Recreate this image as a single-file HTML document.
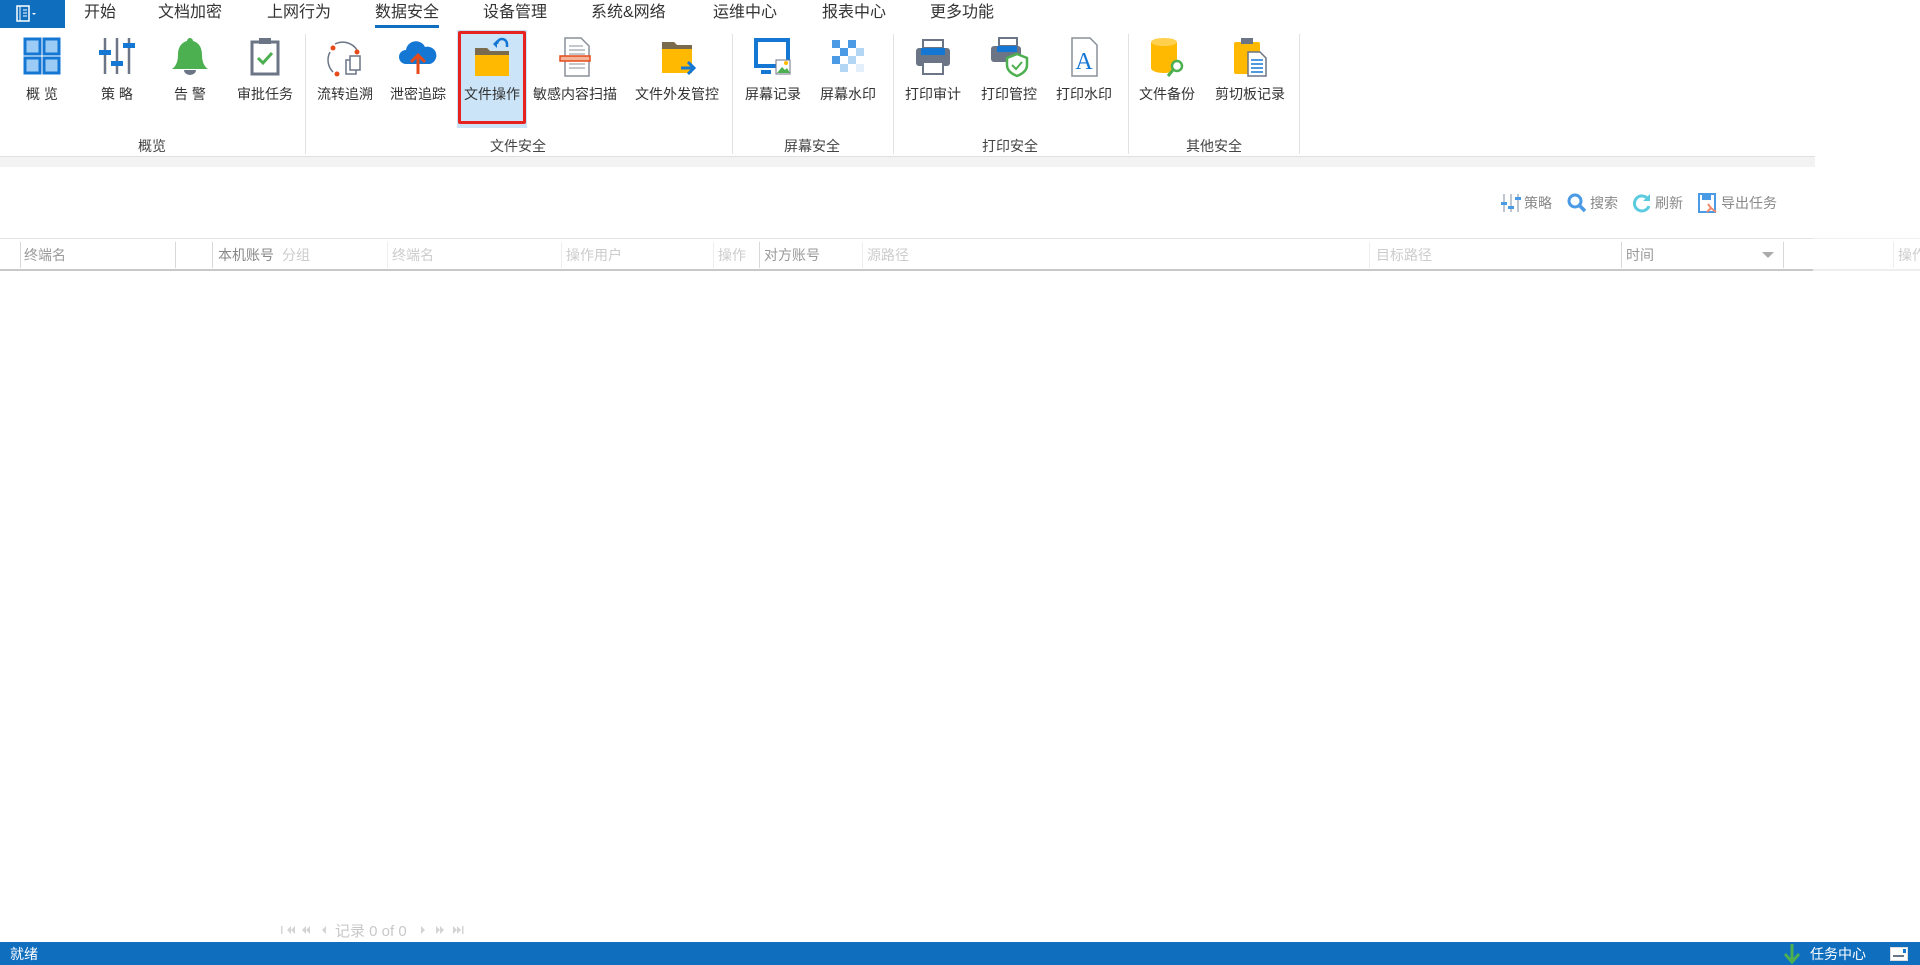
<!DOCTYPE html>
<html><head><meta charset="utf-8"><style>
*{margin:0;padding:0;box-sizing:border-box}
body{width:1920px;height:965px;position:relative;overflow:hidden;background:#fff;font-family:"Liberation Sans","Noto Sans CJK SC",sans-serif;color:#333}
.a{position:absolute;white-space:nowrap}
.tab{position:absolute;top:2px;font-size:16px;color:#333;line-height:22px}
.btn{position:absolute;top:36px;width:120px;margin-left:-60px;text-align:center}
.btn svg{display:block;margin:0 auto;width:40px;height:42px}
.btn span{display:block;font-size:14px;line-height:18px;margin-top:7px;color:#333;white-space:nowrap}
.grp{position:absolute;top:136px;font-size:14px;color:#444;transform:translateX(-50%)}
.sep{position:absolute;top:34px;width:1px;height:120px;background:#e2e2e2}
.hd{position:absolute;top:245px;font-size:14px;line-height:20px;white-space:nowrap}
.cs{position:absolute;top:242px;width:1px;height:26px;background:#d8d8d8}
.tb{position:absolute;top:193px;font-size:14px;color:#888;line-height:20px}
</style></head><body>
<div class="a" style="left:0;top:0;width:65px;height:28px;background:#0f6ebe"></div>
<svg class="a" style="left:16px;top:4px" width="30" height="20" viewBox="0 0 30 20"><rect x="1" y="2" width="12" height="15" fill="none" stroke="#fff" stroke-width="1.5"/><line x1="4" y1="2" x2="4" y2="17" stroke="#fff"/><line x1="7" y1="6" x2="11" y2="6" stroke="#fff"/><line x1="7" y1="9" x2="11" y2="9" stroke="#fff"/><line x1="7" y1="12" x2="11" y2="12" stroke="#fff"/><path d="M16 9 l2 2 l2 -2z" fill="#fff"/></svg>
<div class="tab" style="left:84px">开始</div>
<div class="tab" style="left:158px">文档加密</div>
<div class="tab" style="left:267px">上网行为</div>
<div class="tab" style="left:375px">数据安全</div>
<div class="a" style="left:375px;top:25px;width:64px;height:3px;background:#0f6ebe"></div>
<div class="tab" style="left:483px">设备管理</div>
<div class="tab" style="left:591px">系统&amp;网络</div>
<div class="tab" style="left:713px">运维中心</div>
<div class="tab" style="left:822px">报表中心</div>
<div class="tab" style="left:930px">更多功能</div>

<div class="a" style="left:457px;top:30px;width:70px;height:98px;background:#cce4f7"></div>
<div class="a" style="left:458px;top:31px;width:68px;height:93px;border:3px solid #e8231f;border-radius:2px"></div>

<div class="btn" style="left:42px"><svg viewBox="0 0 40 42"><g fill="#9ccbf5" stroke="#1477d4" stroke-width="3"><rect x="3" y="3" width="15" height="15"/><rect x="22" y="3" width="15" height="15"/><rect x="3" y="22" width="15" height="15"/><rect x="22" y="22" width="15" height="15"/></g></svg><span>概 览</span></div>
<div class="btn" style="left:117px"><svg viewBox="0 0 40 42"><g stroke="#6b7585" stroke-width="2.5"><line x1="8" y1="2" x2="8" y2="38"/><line x1="20" y1="2" x2="20" y2="38"/><line x1="32" y1="2" x2="32" y2="38"/></g><g fill="#1477d4"><rect x="2" y="14" width="12" height="5"/><rect x="14" y="25" width="12" height="5"/><rect x="26" y="7" width="12" height="5"/></g></svg><span>策 略</span></div>
<div class="btn" style="left:190px"><svg viewBox="0 0 40 42"><path d="M20 2 c-2 0-3 2-3 3 c-7 2-9 8-9 14 c0 8-3 12-6 14 h36 c-3-2-6-6-6-14 c0-6-2-12-9-14 c0-1-1-3-3-3z" fill="#4caf50"/><path d="M14 34 a6 5 0 0 0 12 0z" fill="#6b7585"/></svg><span>告 警</span></div>
<div class="btn" style="left:265px"><svg viewBox="0 0 40 42"><rect x="7" y="6" width="26" height="32" fill="none" stroke="#6b7585" stroke-width="3"/><rect x="14" y="2" width="12" height="6" fill="#6b7585"/><path d="M13 22 l5 5 l9-10" fill="none" stroke="#4caf50" stroke-width="3"/></svg><span>审批任务</span></div>
<div class="sep" style="left:305px"></div>
<div class="btn" style="left:345px"><svg viewBox="0 0 40 42"><path d="M10 8 a17 17 0 0 1 22 6 M8 36 a17 17 0 0 1 -3-20" fill="none" stroke="#6b7585" stroke-width="1.5"/><circle cx="8" cy="12" r="2.5" fill="#e64a19"/><circle cx="32" cy="16" r="2.5" fill="#e64a19"/><circle cx="12" cy="38" r="2.5" fill="#e64a19"/><rect x="21" y="24" width="10" height="14" fill="#fff" stroke="#6b7585" stroke-width="1.5"/><rect x="25" y="20" width="10" height="14" fill="#fff" stroke="#6b7585" stroke-width="1.5"/></svg><span>流转追溯</span></div>
<div class="btn" style="left:418px"><svg viewBox="0 0 40 42"><path d="M8 28 a7 7 0 0 1 0-14 a10 10 0 0 1 19-3 a8 8 0 0 1 5 17z" fill="#1477d4"/><path d="M20 38 v-18 M13 26 l7-7 l7 7" fill="none" stroke="#e64a19" stroke-width="3"/></svg><span>泄密追踪</span></div>
<div class="btn" style="left:492px"><svg viewBox="0 0 40 42"><path d="M3 12 h12 l3 3 h19 v25 h-34z" fill="#ffb900"/><path d="M3 12 h12 l3 3 h19 v4 h-34z" fill="#7a6a4e"/><path d="M25 8 a5 5 0 0 1 10 0 v3" fill="none" stroke="#1477d4" stroke-width="2.5"/><path d="M21 8 l4-4 v8z" fill="#1477d4"/></svg><span>文件操作</span></div>
<div class="btn" style="left:575px"><svg viewBox="0 0 40 42"><path d="M10 2 h16 l8 8 v30 h-24z" fill="#fff" stroke="#8a8f99" stroke-width="1.5"/><g stroke="#8a8f99"><line x1="14" y1="10" x2="28" y2="10"/><line x1="14" y1="14" x2="30" y2="14"/><line x1="14" y1="18" x2="30" y2="18"/><line x1="14" y1="28" x2="30" y2="28"/><line x1="14" y1="32" x2="30" y2="32"/></g><rect x="5" y="20" width="30" height="5" fill="#f3b59a" stroke="#e64a19" stroke-width="1.5"/></svg><span>敏感内容扫描</span></div>
<div class="btn" style="left:677px"><svg viewBox="0 0 40 42"><path d="M5 6 h12 l3 3 h15 v28 h-30z" fill="#ffb900"/><path d="M5 6 h12 l3 3 h15 v4 h-30z" fill="#7a6a4e"/><path d="M24 32 h12 M31 26 l6 6 l-6 6" fill="none" stroke="#1477d4" stroke-width="3"/></svg><span>文件外发管控</span></div>
<div class="sep" style="left:732px"></div>
<div class="btn" style="left:773px"><svg viewBox="0 0 40 42"><rect x="3" y="4" width="32" height="26" fill="none" stroke="#1477d4" stroke-width="4"/><rect x="8" y="34" width="10" height="4" fill="#1477d4"/><rect x="23" y="24" width="14" height="14" fill="#fff" stroke="#6b7585"/><path d="M24 37 l5-6 l3 3 l2-2 l3 5z" fill="#4caf50"/><circle cx="33" cy="27" r="2" fill="#ffb900"/></svg><span>屏幕记录</span></div>
<div class="btn" style="left:848px"><svg viewBox="0 0 40 42"><g fill="#4a9ae6"><rect x="4" y="4" width="8" height="8"/><rect x="20" y="4" width="8" height="8"/><rect x="12" y="12" width="8" height="8"/><rect x="4" y="20" width="8" height="8"/></g><g fill="#b3d6f5"><rect x="28" y="12" width="8" height="8"/><rect x="20" y="20" width="8" height="8"/><rect x="12" y="28" width="8" height="8"/></g><rect x="28" y="28" width="8" height="8" fill="#e3effb"/></svg><span>屏幕水印</span></div>
<div class="sep" style="left:893px"></div>
<div class="btn" style="left:933px"><svg viewBox="0 0 40 42"><rect x="10" y="4" width="20" height="8" fill="#fff" stroke="#6b7585" stroke-width="2"/><rect x="3" y="12" width="34" height="18" rx="3" fill="#6b7585"/><rect x="8" y="12" width="24" height="7" fill="#1477d4"/><rect x="10" y="26" width="20" height="12" fill="#fff" stroke="#6b7585" stroke-width="2"/></svg><span>打印审计</span></div>
<div class="btn" style="left:1009px"><svg viewBox="0 0 40 42"><rect x="10" y="2" width="18" height="8" fill="#fff" stroke="#6b7585" stroke-width="2"/><rect x="2" y="10" width="30" height="16" rx="3" fill="#6b7585"/><rect x="8" y="10" width="20" height="6" fill="#1477d4"/><path d="M28 18 l10 4 v7 c0 6-5 9-10 11 c-5-2-10-5-10-11 v-7z" fill="#fff" stroke="#4caf50" stroke-width="2.5"/><path d="M23 29 l4 4 l6-7" fill="none" stroke="#4caf50" stroke-width="2"/></svg><span>打印管控</span></div>
<div class="btn" style="left:1084px"><svg viewBox="0 0 40 42"><path d="M8 2 h18 l7 7 v31 h-25z" fill="#fff" stroke="#8a8f99" stroke-width="1.5"/><text x="20" y="33" text-anchor="middle" font-family="Liberation Serif,serif" font-size="24" fill="#1477d4">A</text></svg><span>打印水印</span></div>
<div class="sep" style="left:1128px;"></div>
<div class="btn" style="left:1167px"><svg viewBox="0 0 40 42"><path d="M4 6 v26 c0 3 6 5 13 5 s13-2 13-5 v-26z" fill="#ffb900"/><ellipse cx="17" cy="6" rx="13" ry="4" fill="#ffd04d"/><circle cx="30" cy="30" r="5" fill="#fff" stroke="#4caf50" stroke-width="2.5"/><line x1="26" y1="34" x2="21" y2="40" stroke="#4caf50" stroke-width="3"/></svg><span>文件备份</span></div>
<div class="btn" style="left:1250px"><svg viewBox="0 0 40 42"><rect x="4" y="6" width="26" height="32" rx="2" fill="#ffb900"/><rect x="11" y="2" width="12" height="6" fill="#6b7585"/><path d="M18 16 h12 l6 6 v18 h-18z" fill="#fff" stroke="#6b7585" stroke-width="1.5"/><g stroke="#1477d4" stroke-width="1.5"><line x1="21" y1="24" x2="33" y2="24"/><line x1="21" y1="28" x2="33" y2="28"/><line x1="21" y1="32" x2="33" y2="32"/><line x1="21" y1="36" x2="33" y2="36"/></g></svg><span>剪切板记录</span></div>
<div class="sep" style="left:1299px"></div>
<div class="grp" style="left:152px">概览</div>
<div class="grp" style="left:518px">文件安全</div>
<div class="grp" style="left:812px">屏幕安全</div>
<div class="grp" style="left:1010px">打印安全</div>
<div class="grp" style="left:1214px">其他安全</div>
<div class="a" style="left:0;top:156px;width:1815px;height:1px;background:#e0e0e0"></div>
<div class="a" style="left:0;top:157px;width:1815px;height:10px;background:#f3f3f3"></div>

<svg class="a" style="left:1501px;top:193px" width="20" height="20" viewBox="0 0 20 20"><g stroke="#aab3bf" stroke-width="1.5"><line x1="3" y1="1" x2="3" y2="19"/><line x1="10" y1="1" x2="10" y2="19"/><line x1="17" y1="1" x2="17" y2="19"/></g><g fill="#4a9ae6"><rect x="0" y="9" width="6" height="3"/><rect x="7" y="13" width="6" height="3"/><rect x="14" y="4" width="6" height="3"/></g></svg>
<div class="tb" style="left:1524px">策略</div>
<svg class="a" style="left:1567px;top:193px" width="20" height="20" viewBox="0 0 20 20"><circle cx="8" cy="8" r="6" fill="none" stroke="#4a9ae6" stroke-width="3"/><line x1="12" y1="12" x2="18" y2="18" stroke="#4a9ae6" stroke-width="3.5"/></svg>
<div class="tb" style="left:1590px">搜索</div>
<svg class="a" style="left:1632px;top:193px" width="20" height="20" viewBox="0 0 20 20"><path d="M16 6 a7.5 7.5 0 1 0 1 7" fill="none" stroke="#5ccbe0" stroke-width="3"/><path d="M18 1 v7 h-7z" fill="#5ccbe0"/></svg>
<div class="tb" style="left:1655px">刷新</div>
<svg class="a" style="left:1698px;top:193px" width="20" height="20" viewBox="0 0 20 20"><rect x="1" y="1" width="16" height="18" fill="#fff" stroke="#4a9ae6" stroke-width="2"/><rect x="4" y="1" width="9" height="6" fill="#4a9ae6"/><path d="M10 11 l3 4 l-4 4 M13 15 l5 4" fill="none" stroke="#f08a6a" stroke-width="2"/></svg>
<div class="tb" style="left:1721px">导出任务</div>

<div class="a" style="left:0;top:238px;width:1813px;height:1px;background:#e4e4e4"></div>
<div class="a" style="left:1813px;top:238px;width:107px;height:1px;background:#f0f0f0"></div>
<div class="a" style="left:0;top:269px;width:1813px;height:2px;background:#c8c8c8"></div>
<div class="a" style="left:1813px;top:269px;width:107px;height:2px;background:#eee"></div>
<div class="cs" style="left:20px"></div><div class="cs" style="left:175px"></div><div class="cs" style="left:212px"></div><div class="cs" style="left:387px;background:#eee"></div><div class="cs" style="left:561px;background:#eee"></div><div class="cs" style="left:713px;background:#eee"></div><div class="cs" style="left:759px"></div><div class="cs" style="left:862px;background:#eee"></div><div class="cs" style="left:1369px;background:#eee"></div><div class="cs" style="left:1621px"></div><div class="cs" style="left:1783px"></div><div class="cs" style="left:1893px;background:#eee"></div>
<div class="hd" style="left:24px;color:#999">终端名</div>
<div class="hd" style="left:218px;color:#888">本机账号</div>
<div class="hd" style="left:282px;color:#ccc">分组</div>
<div class="hd" style="left:392px;color:#ccc">终端名</div>
<div class="hd" style="left:566px;color:#ccc">操作用户</div>
<div class="hd" style="left:718px;color:#ccc">操作</div>
<div class="hd" style="left:764px;color:#999">对方账号</div>
<div class="hd" style="left:867px;color:#ccc">源路径</div>
<div class="hd" style="left:1376px;color:#ccc">目标路径</div>
<div class="hd" style="left:1626px;color:#999">时间</div>
<div class="a" style="left:1762px;top:252px;width:0;height:0;border-left:6px solid transparent;border-right:6px solid transparent;border-top:6px solid #aaa"></div>
<div class="hd" style="left:1898px;color:#ccc">操作</div>

<svg class="a" style="left:278px;top:924px" width="190" height="12" viewBox="0 0 190 12"><g fill="#d4d4d4"><rect x="3" y="2" width="1.5" height="8"/><path d="M9 6 l4-4 v8z M13 6 l4-4 v8z"/><path d="M24 6 l4-4 v8z M28 6 l4-4 v8z"/><path d="M44 6 l4-4 v8z"/><path d="M143 2 l4 4 l-4 4z"/><path d="M158 2 l4 4 l-4 4z M162 2 l4 4 l-4 4z"/><path d="M175 2 l4 4 l-4 4z M179 2 l4 4 l-4 4z"/><rect x="184" y="2" width="1.5" height="8"/></g></svg>
<div class="a" style="left:335px;top:920px;font-size:15px;color:#c8c8c8">记录 0 of 0</div>

<div class="a" style="left:0;top:942px;width:1920px;height:23px;background:#0f6ebe"></div>
<div class="a" style="left:10px;top:944px;font-size:14px;color:#fff;line-height:20px">就绪</div>
<svg class="a" style="left:1783px;top:944px" width="18" height="20" viewBox="0 0 18 20"><path d="M9 0 v18 M2 10 l7 8 l7-8" fill="none" stroke="#4caf50" stroke-width="3"/></svg>
<div class="a" style="left:1810px;top:944px;font-size:14px;color:#fff;line-height:20px">任务中心</div>
<div class="a" style="left:1890px;top:947px;width:18px;height:14px;background:#fff;border:1px solid #ddd"></div>
<div class="a" style="left:1893px;top:955px;width:11px;height:2px;background:#6b7585"></div>
<div class="a" style="left:1903px;top:949px;width:3px;height:4px;background:#1477d4"></div>
</body></html>
